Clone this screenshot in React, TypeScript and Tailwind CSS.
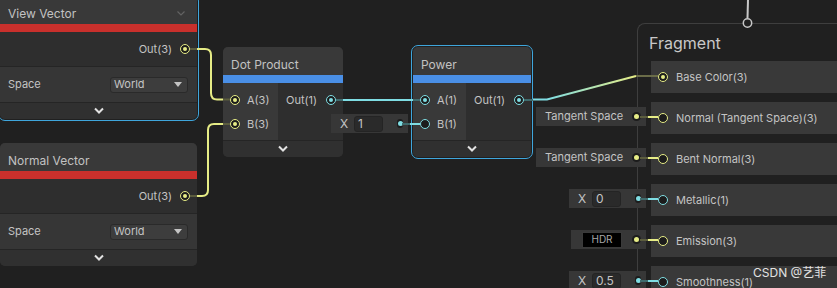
import React from "react";

const tone = {
  y: { ring: "border-[#e6ec86]", dot: "bg-[#e6ec86]" },
  c: { ring: "border-[#7fdde3]", dot: "bg-[#7fdde3]" },
};

type Tone = keyof typeof tone;

const Port = ({ t, filled }: { t: Tone; filled?: boolean }) => (
  <span
    className={`flex h-[10px] w-[10px] shrink-0 items-center justify-center rounded-full border-[1.5px] bg-[#1c1c1c] ${tone[t].ring}`}
  >
    {filled && <span className={`h-[4px] w-[4px] rounded-full ${tone[t].dot}`} />}
  </span>
);

const FieldDot = ({ t }: { t: Tone }) => (
  <span className="flex h-[9px] w-[9px] items-center justify-center rounded-full bg-[#1c1c1c]">
    <span className={`h-[5px] w-[5px] rounded-full ${tone[t].dot}`} />
  </span>
);

const Chevron = () => (
  <svg width="12" height="8" viewBox="0 0 12 8">
    <path d="M2 1.5 L6 5.5 L10 1.5" stroke="#e2e2e2" strokeWidth="2" fill="none" />
  </svg>
);

const Title = ({ children, bar }: { children: React.ReactNode; bar: string }) => (
  <>
    <div className="flex h-[28px] items-start justify-between bg-[#393939] px-[8px] pt-[9px] text-[12px] leading-[18px] text-[#c2c2c2]">
      {children}
    </div>
    <div className={`h-[8px] ${bar}`} />
  </>
);

const Collapse = () => (
  <div className="flex h-[17px] items-center justify-center border-t border-[#252525] bg-[#303030]">
    <Chevron />
  </div>
);

const Dropdown = () => (
  <div className="flex h-[16px] w-[78px] items-center justify-between rounded-[3px] border border-[#2a2a2a] bg-[#3d3d3d] pl-[3px] pr-[5px] text-[11px] text-[#c4c4c4]">
    World
    <svg width="8" height="5" viewBox="0 0 8 5">
      <path d="M0 0 H8 L4 5 Z" fill="#c4c4c4" />
    </svg>
  </div>
);

const VectorNode = ({ title, top, selected }: { title: string; top: string; selected?: boolean }) => (
  <div
    className={`absolute left-0 w-[197px] overflow-hidden rounded-[5px] bg-[#2e2e2e] ${top} ${
      selected ? "outline-[1.5px] outline-offset-[1px] outline-[#3fa6dc]" : ""
    }`}
  >
    <Title bar="bg-[#c9302c]">
      {title}
      {selected && (
        <svg width="8" height="5" viewBox="0 0 8 5" className="mt-[6px] mr-[4px]">
          <path d="M0.5 0.5 L4 4 L7.5 0.5" stroke="#626262" strokeWidth="1.2" fill="none" />
        </svg>
      )}
    </Title>
    <div className="flex h-[34px] items-center justify-end gap-[8px] pr-[7px] text-[11px] text-[#c4c4c4]">
      Out(3)
      <Port t="y" filled />
    </div>
    <div className="flex h-[36px] items-center justify-between border-t border-[#252525] bg-[#363636] pl-[8px] pr-[9px] text-[11px] text-[#c4c4c4]">
      Space
      <Dropdown />
    </div>
    <Collapse />
  </div>
);

const MathNode = ({
  title,
  pos,
  inCol,
  inputs,
  selected,
}: {
  title: string;
  pos: string;
  inCol: string;
  inputs: { label: string; filled: boolean }[];
  selected?: boolean;
}) => (
  <div
    className={`absolute top-[47px] overflow-hidden rounded-[5px] bg-[#2e2e2e] ${pos} ${
      selected ? "outline-[1.5px] outline-offset-[1px] outline-[#3fa6dc]" : ""
    }`}
  >
    <Title bar="bg-[#4a8fe6]">{title}</Title>
    <div className="flex h-[57px]">
      <div className={`flex flex-col bg-[#393939] pt-[5px] pl-[7px] ${inCol}`}>
        {inputs.map((p) => (
          <div key={p.label} className="flex h-[24px] items-center gap-[7px] text-[11px] text-[#c4c4c4]">
            <Port t={inputs[0].label.includes("3") ? "y" : "c"} filled={p.filled} />
            {p.label}
          </div>
        ))}
      </div>
      <div className="flex flex-1 justify-end pt-[5px] pr-[7px]">
        <div className="flex h-[24px] items-center gap-[9px] text-[11px] text-[#c4c4c4]">
          Out(1)
          <Port t="c" filled />
        </div>
      </div>
    </div>
    <Collapse />
  </div>
);

const Field = ({ pos, t, children }: { pos: string; t: Tone; children: React.ReactNode }) => (
  <div
    className={`absolute right-[191px] flex h-[19px] items-center justify-between bg-[#373737] pr-[5px] text-[11px] text-[#c4c4c4] ${pos}`}
  >
    {children}
    <FieldDot t={t} />
  </div>
);

const XField = ({ value }: { value: string }) => (
  <div className="flex items-center gap-[6px] pl-[9px] text-[12px]">
    <span className="w-[8px]">X</span>
    <span className="flex h-[16px] w-[29px] items-center rounded-[3px] border border-[#242424] bg-[#2a2a2a] pl-[3px]">
      {value}
    </span>
    <span className="w-[8px]" />
  </div>
);

const slots: { label: string; t: Tone; filled?: boolean }[] = [
  { label: "Base Color(3)", t: "y", filled: true },
  { label: "Normal (Tangent Space)(3)", t: "y" },
  { label: "Bent Normal(3)", t: "y" },
  { label: "Metallic(1)", t: "c" },
  { label: "Emission(3)", t: "y" },
  { label: "Smoothness(1)", t: "c" },
];

const Fragment = () => (
  <div className="absolute left-[637px] top-[23px] h-[300px] w-[260px] rounded-tl-[8px] border-l border-t border-[#3e3e3e] bg-[#202020]">
    <div className="pl-[11px] pt-[7px] text-[16px] leading-[24px] text-[#c8c8c8]">Fragment</div>
    <div className="mt-[6px] ml-[13px] flex flex-col gap-[9px]">
      {slots.map((s) => (
        <div key={s.label} className="flex h-[32px] items-center gap-[8px] bg-[#393939] pl-[7px] text-[11px] text-[#c4c4c4]">
          <Port t={s.t} filled={s.filled} />
          {s.label}
        </div>
      ))}
    </div>
  </div>
);

const Wires = () => (
  <svg className="pointer-events-none absolute inset-0" width="837" height="288">
    <defs>
      <linearGradient id="cy" x1="547" y1="0" x2="636" y2="0" gradientUnits="userSpaceOnUse">
        <stop offset="0" stopColor="#7fdde3" />
        <stop offset="1" stopColor="#e6ec86" />
      </linearGradient>
    </defs>
    <g fill="none" strokeWidth="2">
      {/* view vector -> A(3) */}
      <path d="M190 49 H197" stroke="#5b5c3e" />
      <path d="M197 49 H205 Q211 49 211 55 V93 Q211 99.5 217 99.5 H223" stroke="#e6ec86" />
      <path d="M223 99.5 H230" stroke="#5b5c3e" />
      {/* normal vector -> B(3) */}
      <path d="M190 196 H197" stroke="#5b5c3e" />
      <path d="M197 196 H202 Q208 196 208 190 V130 Q208 124 214 124 H223" stroke="#e6ec86" />
      <path d="M223 124 H230" stroke="#5b5c3e" />
      {/* dot -> power */}
      <path d="M336 100 H343" stroke="#3f6b6d" />
      <path d="M343 100 H413" stroke="#7fdde3" />
      <path d="M413 100 H420" stroke="#3f6b6d" />
      {/* x field -> B(1) */}
      <path d="M402 124 H410" stroke="#3f6b6d" />
      <path d="M410 124 H420" stroke="#7fdde3" />
      {/* power -> base color */}
      <path d="M524 100 H533" stroke="#3f6b6d" />
      <path d="M533 99.5 H547 L636 76" stroke="url(#cy)" />
      <path d="M636 76 H658" stroke="#6a6c48" />
      {/* field stubs */}
      <path d="M640 117 H648" stroke="#5b5c3e" />
      <path d="M648 117 H658" stroke="#e6ec86" />
      <path d="M640 158 H648" stroke="#5b5c3e" />
      <path d="M648 158 H658" stroke="#e6ec86" />
      <path d="M640 199 H648" stroke="#3f6b6d" />
      <path d="M648 199 H658" stroke="#7fdde3" />
      <path d="M640 240 H648" stroke="#5b5c3e" />
      <path d="M648 240 H658" stroke="#e6ec86" />
      <path d="M640 281 H648" stroke="#3f6b6d" />
      <path d="M648 281 H658" stroke="#7fdde3" />
      {/* vertex -> fragment */}
      <path d="M748 0 L747.5 18" stroke="#c8c8c8" />
    </g>
    <circle cx="747.5" cy="23" r="4.2" fill="#202020" stroke="#c8c8c8" strokeWidth="1.5" />
  </svg>
);

export default function App() {
  return (
    <div className="relative h-[288px] w-[837px] overflow-hidden bg-[#202020] font-['Inter',sans-serif]">
      <Fragment />
      <VectorNode title="View Vector" top="top-[-4px]" selected />
      <VectorNode title="Normal Vector" top="top-[143px]" />
      <MathNode
        title="Dot Product"
        pos="left-[223px] w-[120px]"
        inCol="w-[55px]"
        inputs={[
          { label: "A(3)", filled: true },
          { label: "B(3)", filled: true },
        ]}
      />
      <MathNode
        title="Power"
        pos="left-[413px] w-[118px]"
        inCol="w-[53px]"
        selected
        inputs={[
          { label: "A(1)", filled: true },
          { label: "B(1)", filled: false },
        ]}
      />
      <Field pos="top-[114px] w-[77px] right-[429px]" t="c">
        <XField value="1" />
      </Field>
      <Field pos="top-[107px] w-[110px]" t="y">
        <span className="pl-[9px]">Tangent Space</span>
      </Field>
      <Field pos="top-[148px] w-[110px]" t="y">
        <span className="pl-[9px]">Tangent Space</span>
      </Field>
      <Field pos="top-[189px] w-[77px]" t="c">
        <XField value="0" />
      </Field>
      <Field pos="top-[230px] w-[75px]" t="y">
        <span className="ml-[11px] flex h-[16px] w-[40px] items-center justify-center border border-[#3a3a3a] bg-black text-[10px] text-[#a8a8a8]">
          HDR
        </span>
      </Field>
      <Field pos="top-[271px] w-[77px]" t="c">
        <XField value="0.5" />
      </Field>
      <Wires />
      <div className="absolute left-[753px] top-[264px] text-[12px] leading-[18px] text-[#e2e2e2] font-['Inter','Noto_Sans_CJK_SC',sans-serif]">
        CSDN @艺菲
      </div>
    </div>
  );
}
